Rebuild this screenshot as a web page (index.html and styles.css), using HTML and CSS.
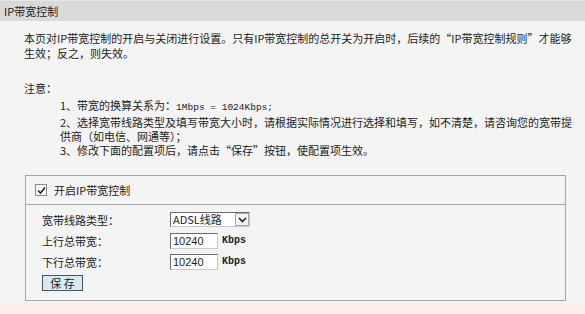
FILE: index.html
```html
<!DOCTYPE html>
<html lang="zh-CN">
<head>
    <meta charset="UTF-8">
    <title>IP带宽控制</title>
    <link rel="stylesheet" href="styles.css">
</head>
<body>
    <div class="title">IP带宽控制</div>

    <div class="content">
        <p class="intro">本页对IP带宽控制的开启与关闭进行设置。只有IP带宽控制的总开关为开启时，后续的“IP带宽控制规则”才能够<br>生效；反之，则失效。</p>

        <div class="note-head">注意：</div>
        <div class="notes">
            <div>1、带宽的换算关系为：<span class="mono">1Mbps = 1024Kbps;</span></div>
            <div>2、选择宽带线路类型及填写带宽大小时，请根据实际情况进行选择和填写，如不清楚，请咨询您的宽带提<br>供商（如电信、网通等）；</div>
            <div>3、修改下面的配置项后，请点击“保存”按钮，使配置项生效。</div>
        </div>

        <form class="panel" id="bw-form">
            <label class="panel-head">
                <span class="check">
                    <svg width="9" height="9" viewBox="0 0 9 9"><path d="M1 4.5 L3.5 7 L8 1.5" fill="none" stroke="#222" stroke-width="1.6"/></svg>
                </span>
                开启IP带宽控制
            </label>
            <div class="panel-body">
                <label>宽带线路类型：</label>
                <div class="select">
                    <span class="select-text">ADSL线路</span>
                    <span class="select-arrow">
                        <svg width="9" height="6" viewBox="0 0 9 6"><path d="M1 1 L4.5 4.5 L8 1" fill="none" stroke="#222" stroke-width="1.6"/></svg>
                    </span>
                </div>

                <label for="up">上行总带宽：</label>
                <div class="field"><input type="text" id="up" value="10240"><span class="unit">Kbps</span></div>

                <label for="down">下行总带宽：</label>
                <div class="field"><input type="text" id="down" value="10240"><span class="unit">Kbps</span></div>

                <div class="actions"><button type="submit">保&nbsp;存</button></div>
            </div>
        </form>
    </div>

    <div class="footer"></div>
</body>
</html>
```

FILE: styles.css
```css
body {
    margin: 0;
    width: 585px;
    height: 314px;
    overflow: hidden;
    background-color: #f4f4f4;
    font-family: "Noto Sans CJK SC", sans-serif;
    font-size: 11px;
    color: #222;
}

.title {
    height: 20px;
    line-height: 20px;
    padding-left: 4px;
    background-color: #d9d9d9;
    border-top: 1px solid #e6e6e6;
}

.content {
    padding: 10px 19px 0 24px;
}

.intro {
    margin: 0;
    line-height: 15px;
    white-space: nowrap;
}

.note-head {
    margin-top: 20px;
    line-height: 14px;
}

.notes {
    margin-top: 3px;
    padding-left: 36px;
    line-height: 14px;
    white-space: nowrap;
}

.mono {
    font-family: "Liberation Mono", monospace;
    font-size: 9.5px;
}

.panel {
    margin: 18px 0 0 1px;
    border: 1px solid #a5a5a5;
}

.panel-head {
    display: flex;
    align-items: center;
    gap: 7px;
    height: 28px;
    padding-left: 9px;
    border-bottom: 1px solid #a5a5a5;
}

.check {
    display: flex;
    align-items: center;
    justify-content: center;
    width: 12px;
    height: 12px;
    box-sizing: border-box;
    background-color: #fff;
    border: 1px solid #8a8a8a;
}

.panel-body {
    display: grid;
    grid-template-columns: 128px auto;
    grid-auto-rows: 21px;
    align-items: center;
    padding: 4px 0 7px 16px;
}

.select {
    display: flex;
    align-items: center;
    justify-content: space-between;
    width: 80px;
    height: 15px;
    box-sizing: border-box;
    background-color: #fff;
    border: 1px solid #c8c8c8;
    border-top-color: #6b6b6b;
    border-left-color: #6b6b6b;
}

.select-text {
    padding-left: 2px;
    line-height: 13px;
}

.select-arrow {
    display: flex;
    align-items: center;
    justify-content: center;
    width: 14px;
    height: 13px;
    box-sizing: border-box;
    background-color: #f2f2f2;
    border: 1px solid #a8a8a8;
}

.field {
    display: flex;
    align-items: center;
}

.field input {
    width: 48px;
    height: 16px;
    box-sizing: border-box;
    padding: 0 2px;
    font-family: "Liberation Sans", Arial, sans-serif;
    font-size: 11px;
    color: #222;
    background-color: #fff;
    border: 1px solid #c8c8c8;
    border-top-color: #6b6b6b;
    border-left-color: #6b6b6b;
    outline: none;
}

.unit {
    margin-left: 4px;
    font-family: "Liberation Mono", monospace;
    font-size: 10px;
    font-weight: bold;
}

.actions {
    grid-column: 1 / -1;
}

.actions button {
    width: 41px;
    height: 16px;
    padding: 0;
    font-family: "Noto Sans CJK SC", sans-serif;
    font-size: 11px;
    line-height: 14px;
    color: #222;
    background-color: #d8e9f6;
    border: 1px solid #4a5560;
    cursor: pointer;
}

.footer {
    position: absolute;
    left: 0;
    right: 0;
    top: 303px;
    height: 11px;
    background-color: #fbeeea;
}
```
